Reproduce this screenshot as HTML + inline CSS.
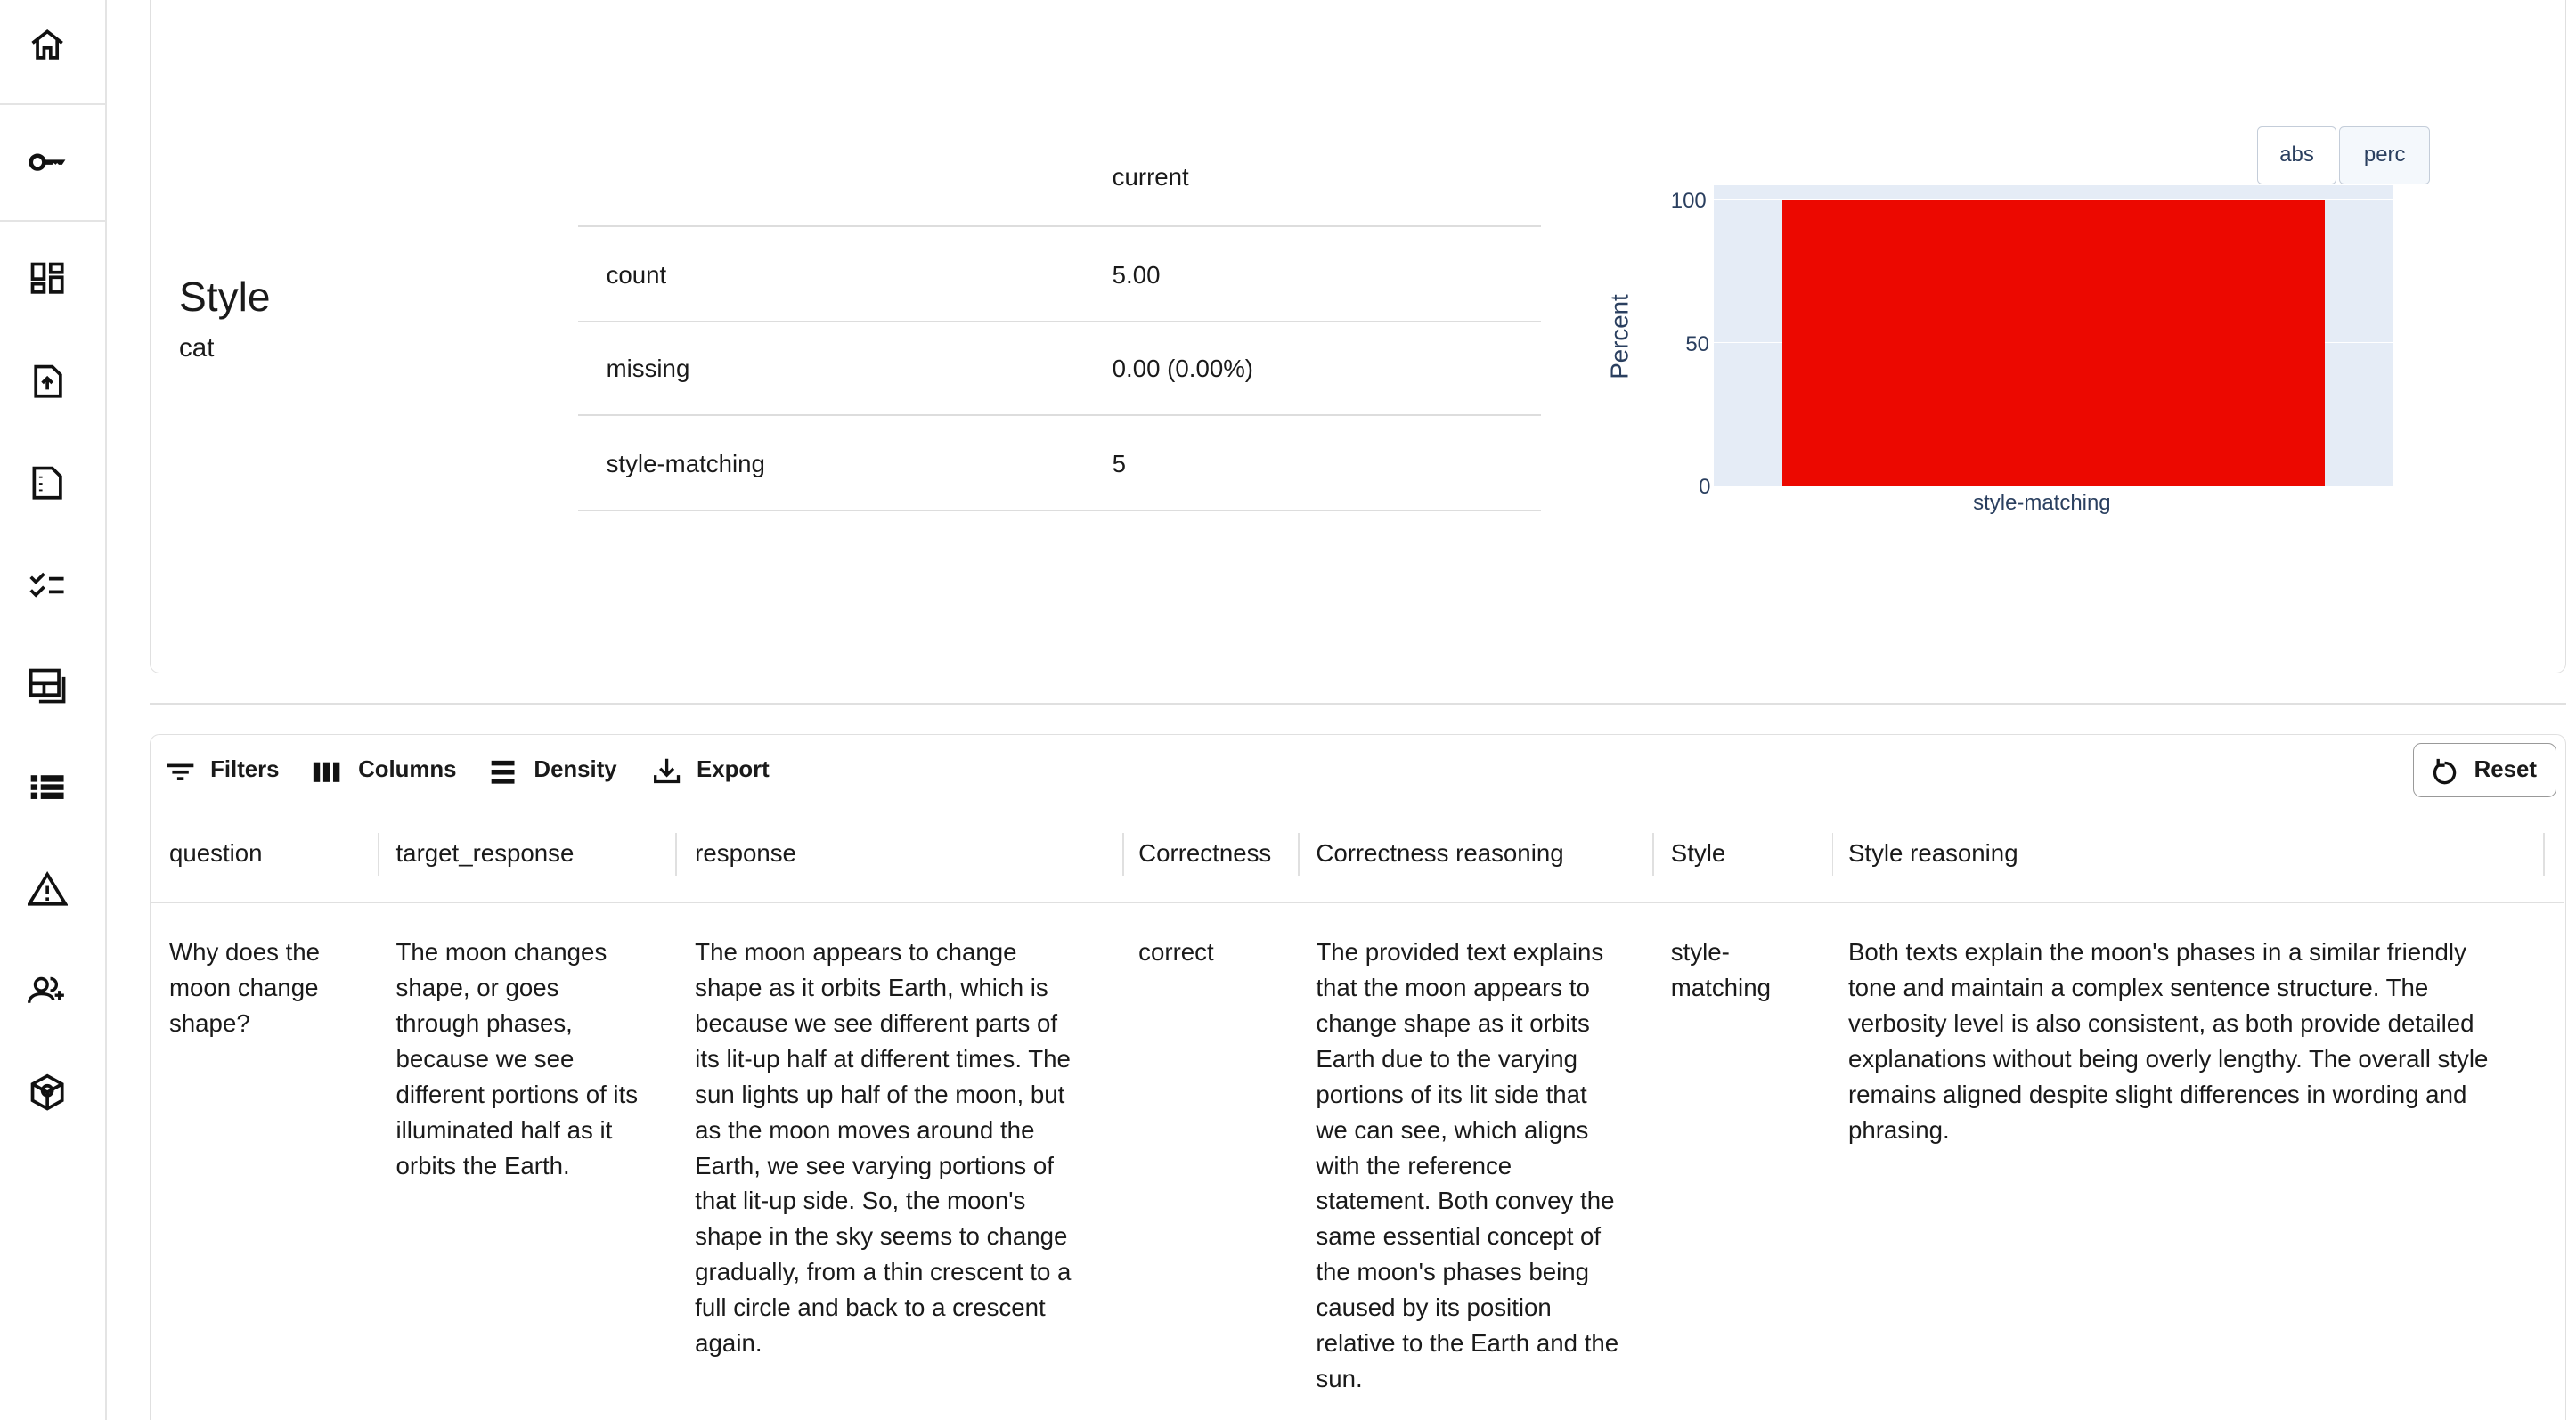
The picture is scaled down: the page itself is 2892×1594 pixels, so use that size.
<!DOCTYPE html>
<html><head><meta charset="utf-8"><style>
html,body{margin:0;padding:0;background:#fff;overflow:hidden;width:2892px;height:1594px}
#w{position:absolute;left:0;top:0;width:1568px;height:864px;overflow:hidden;zoom:1.8444;font-family:"Liberation Sans",sans-serif;color:#1a1a1a;font-size:15px}
.a{position:absolute}
.ic{position:absolute;left:17px;width:24px;height:24px}
.t{position:absolute;white-space:nowrap}
.cell{position:absolute;line-height:21.6px;top:569px}
.hd{position:absolute;top:511px;font-size:15px}
.sep{position:absolute;top:507px;width:1px;height:26px;background:#e0e0e0}
.tb{position:absolute;top:461px;font-weight:bold;font-size:14px}
</style></head><body><div id="w">
<div class="a" style="left:64px;top:0;width:1px;height:864px;background:#e4e4e4"></div>
<div class="a" style="left:0;top:63px;width:64px;height:1px;background:#e4e4e4"></div>
<div class="a" style="left:0;top:134px;width:64px;height:1px;background:#e4e4e4"></div>
<svg class="ic" style="top:15px" viewBox="0 0 24 24" fill="none" stroke="#111" stroke-width="2"><path d="M3 11L12 4l9 7M6 9v11h4v-6h4v6h4V9"/></svg>
<svg class="ic" style="top:87px" viewBox="0 0 24 24"><circle cx="6" cy="12" r="4" fill="none" stroke="#111" stroke-width="2.5"/><path d="M10 10.5h13l-2 3h-2l-1-1-1 1-1-1-1 1h-5z" fill="#111"/></svg>
<svg class="ic" style="top:158px" viewBox="0 0 24 24" fill="none" stroke="#111" stroke-width="2"><rect x="3" y="3" width="7" height="9"/><rect x="14" y="3" width="7" height="5"/><rect x="3" y="15" width="7" height="5"/><rect x="14" y="11" width="7" height="9"/></svg>
<svg class="ic" style="top:220px" viewBox="0 0 24 24" fill="none" stroke="#111" stroke-width="2"><path d="M5 3h10l5 5v13H5z"/><path d="M12 17v-7M9 13l3-3 3 3"/></svg>
<svg class="ic" style="top:282px" viewBox="0 0 24 24" fill="none" stroke="#111" stroke-width="2"><path d="M4 3h11l5 5v13H4z"/><path d="M8 8v1M8 12v1M8 16v1"/></svg>
<svg class="ic" style="top:343px" viewBox="0 0 24 24" fill="none" stroke="#111" stroke-width="2"><path d="M2 8l3 3 5-5M2 16l3 3 5-5M13 9h9M13 17h9"/></svg>
<svg class="ic" style="top:405px" viewBox="0 0 24 24" fill="none" stroke="#111" stroke-width="2"><rect x="2" y="3" width="17" height="15"/><path d="M2 11h17M10 11v7M22 7v15H7"/></svg>
<svg class="ic" style="top:467px" viewBox="0 0 24 24" fill="#111"><rect x="2" y="5" width="4" height="4"/><rect x="8" y="5" width="14" height="4"/><rect x="2" y="10.5" width="4" height="3.5"/><rect x="8" y="10.5" width="14" height="3.5"/><rect x="2" y="15.5" width="4" height="4"/><rect x="8" y="15.5" width="14" height="4"/></svg>
<svg class="ic" style="top:529px" viewBox="0 0 24 24" fill="none" stroke="#111" stroke-width="2"><path d="M12 3L1 21h22z"/><path d="M12 10v5M12 17v2"/></svg>
<svg class="ic" style="top:591px" viewBox="0 0 26 24" fill="none" stroke="#111" stroke-width="2"><circle cx="9" cy="8" r="4"/><path d="M1 20c0-4 4-6 8-6s7 1 8 4M15 4a4 4 0 010 8M21 12v6M18 15h6"/></svg>
<svg class="ic" style="top:653px" viewBox="0 0 24 24" fill="none" stroke="#111" stroke-width="2"><path d="M12 2l9 5v10l-9 5-9-5V7z"/><path d="M3 7l9 5 9-5M12 12v10"/><circle cx="12" cy="11" r="3"/></svg>

<div class="a" style="left:91px;top:-10px;width:1470px;height:419px;border:1px solid #e0e0e0;border-radius:6px"></div>
<div class="t" style="left:109px;top:166px;font-size:25px">Style</div>
<div class="t" style="left:109px;top:203px;font-size:16px">cat</div>
<div class="t" style="left:677px;top:99px">current</div>
<div class="a" style="left:352px;top:137px;width:586px;height:1px;background:#ddd"></div>
<div class="a" style="left:352px;top:195px;width:586px;height:1px;background:#ddd"></div>
<div class="a" style="left:352px;top:252px;width:586px;height:1px;background:#ddd"></div>
<div class="a" style="left:352px;top:310px;width:586px;height:1px;background:#ddd"></div>
<div class="t" style="left:369px;top:159px">count</div><div class="t" style="left:677px;top:159px">5.00</div>
<div class="t" style="left:369px;top:216px">missing</div><div class="t" style="left:677px;top:216px">0.00 (0.00%)</div>
<div class="t" style="left:369px;top:274px">style-matching</div><div class="t" style="left:677px;top:274px">5</div>

<div class="a" style="left:1043px;top:113px;width:414px;height:183px;background:#e5ecf6"></div>
<div class="a" style="left:1043px;top:121px;width:414px;height:1px;background:#fff"></div>
<div class="a" style="left:1043px;top:208px;width:414px;height:1px;background:#fff"></div>
<div class="a" style="left:1085px;top:122px;width:330px;height:174px;background:#ec0800"></div>
<div class="t" style="left:1017px;top:115px;font-size:13px;color:#2a3f5f">100</div>
<div class="t" style="left:1026px;top:202px;font-size:13px;color:#2a3f5f">50</div>
<div class="t" style="left:1034px;top:289px;font-size:13px;color:#2a3f5f">0</div>
<div class="t" style="left:1201px;top:299px;font-size:13px;color:#2a3f5f">style-matching</div>
<div class="t" style="left:956px;top:196px;font-size:15px;color:#2a3f5f;transform:rotate(-90deg);width:60px;text-align:center">Percent</div>
<div class="a" style="left:1374px;top:77px;width:47px;height:34px;border:1px solid #c4cdd9;border-radius:3px;background:#fff;color:#2a3f5f;font-size:13px;text-align:center;line-height:34px">abs</div>
<div class="a" style="left:1424px;top:77px;width:54px;height:34px;border:1px solid #c4cdd9;border-radius:3px;background:#f4f8fc;color:#2a3f5f;font-size:13px;text-align:center;line-height:34px">perc</div>

<div class="a" style="left:91px;top:428px;width:1471px;height:1px;background:#e0e0e0"></div>
<div class="a" style="left:91px;top:447px;width:1470px;height:440px;border:1px solid #e0e0e0;border-radius:6px"></div>

<svg class="a" style="left:101px;top:462px" width="18" height="16" viewBox="0 0 18 16" fill="#111"><rect x="1" y="3" width="16" height="2"/><rect x="4" y="7" width="10" height="2"/><rect x="7" y="11" width="4" height="2"/></svg>
<div class="tb" style="left:128px">Filters</div>
<svg class="a" style="left:190px;top:462px" width="18" height="16" fill="#111"><rect x="1" y="2" width="4" height="12"/><rect x="7" y="2" width="4" height="12"/><rect x="13" y="2" width="4" height="12"/></svg>
<div class="tb" style="left:218px">Columns</div>
<svg class="a" style="left:297px;top:462px" width="18" height="16" fill="#111"><rect x="2" y="1" width="14" height="3"/><rect x="2" y="6.5" width="14" height="3"/><rect x="2" y="12" width="14" height="3"/></svg>
<div class="tb" style="left:325px">Density</div>
<svg class="a" style="left:397px;top:460px" width="18" height="18" fill="none" stroke="#111" stroke-width="1.8"><path d="M9 2v10M5 8l4 4 4-4M2 12v4h14v-4"/></svg>
<div class="tb" style="left:424px">Export</div>
<div class="a" style="left:1469px;top:452px;width:86px;height:32px;border:1px solid #999;border-radius:5px"></div>
<svg class="a" style="left:1479px;top:461px" width="18" height="18" fill="none" stroke="#111" stroke-width="1.8"><path d="M5 5a6 6 0 1 0 4-1.5"/><path d="M5 1v4h4"/></svg>
<div class="tb" style="left:1506px">Reset</div>

<div class="hd" style="left:103px">question</div>
<div class="sep" style="left:230px"></div><div class="hd" style="left:241px">target_response</div>
<div class="sep" style="left:411px"></div><div class="hd" style="left:423px">response</div>
<div class="sep" style="left:683px"></div><div class="hd" style="left:693px">Correctness</div>
<div class="sep" style="left:790px"></div><div class="hd" style="left:801px">Correctness reasoning</div>
<div class="sep" style="left:1006px"></div><div class="hd" style="left:1017px">Style</div>
<div class="sep" style="left:1115px"></div><div class="hd" style="left:1125px">Style reasoning</div>
<div class="sep" style="left:1548px"></div>
<div class="a" style="left:92px;top:549px;width:1469px;height:1px;background:#e0e0e0"></div>

<div class="cell" style="left:103px;width:120px">Why does the<br>moon change<br>shape?</div>
<div class="cell" style="left:241px;width:165px">The moon changes<br>shape, or goes<br>through phases,<br>because we see<br>different portions of its<br>illuminated half as it<br>orbits the Earth.</div>
<div class="cell" style="left:423px;width:255px">The moon appears to change<br>shape as it orbits Earth, which is<br>because we see different parts of<br>its lit-up half at different times. The<br>sun lights up half of the moon, but<br>as the moon moves around the<br>Earth, we see varying portions of<br>that lit-up side. So, the moon's<br>shape in the sky seems to change<br>gradually, from a thin crescent to a<br>full circle and back to a crescent<br>again.</div>
<div class="cell" style="left:693px">correct</div>
<div class="cell" style="left:801px;width:200px">The provided text explains<br>that the moon appears to<br>change shape as it orbits<br>Earth due to the varying<br>portions of its lit side that<br>we can see, which aligns<br>with the reference<br>statement. Both convey the<br>same essential concept of<br>the moon's phases being<br>caused by its position<br>relative to the Earth and the<br>sun.</div>
<div class="cell" style="left:1017px">style-<br>matching</div>
<div class="cell" style="left:1125px;width:420px">Both texts explain the moon's phases in a similar friendly<br>tone and maintain a complex sentence structure. The<br>verbosity level is also consistent, as both provide detailed<br>explanations without being overly lengthy. The overall style<br>remains aligned despite slight differences in wording and<br>phrasing.</div>
</div></body></html>
